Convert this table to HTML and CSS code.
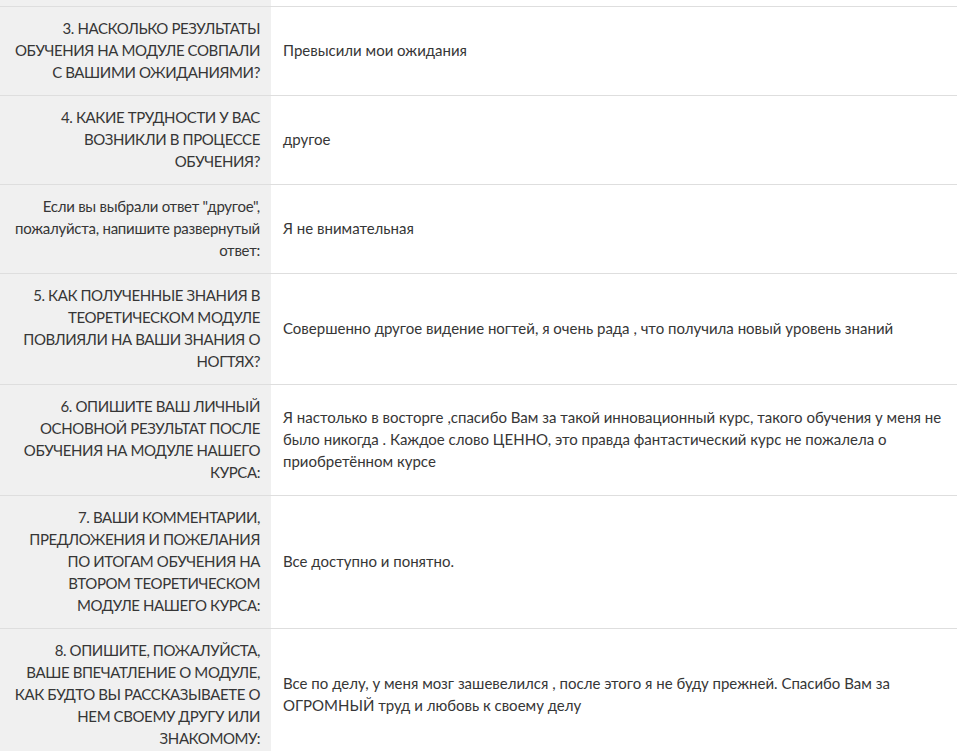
FILE: index.html
```html
<!DOCTYPE html>
<html lang="ru">
<head>
    <meta charset="UTF-8">
    <title>Результаты анкеты</title>
    <link rel="stylesheet" href="styles.css">
</head>
<body>
    <table class="answers">
        <tr class="cut-row">
            <th></th>
            <td></td>
        </tr>
        <tr>
            <th>3. НАСКОЛЬКО РЕЗУЛЬТАТЫ ОБУЧЕНИЯ НА МОДУЛЕ СОВПАЛИ С ВАШИМИ ОЖИДАНИЯМИ?</th>
            <td>Превысили мои ожидания</td>
        </tr>
        <tr>
            <th>4. КАКИЕ ТРУДНОСТИ У ВАС ВОЗНИКЛИ В ПРОЦЕССЕ ОБУЧЕНИЯ?</th>
            <td>другое</td>
        </tr>
        <tr>
            <th class="note">Если вы выбрали ответ "другое", пожалуйста, напишите развернутый ответ:</th>
            <td>Я не внимательная</td>
        </tr>
        <tr>
            <th>5. КАК ПОЛУЧЕННЫЕ ЗНАНИЯ В ТЕОРЕТИЧЕСКОМ МОДУЛЕ ПОВЛИЯЛИ НА ВАШИ ЗНАНИЯ О НОГТЯХ?</th>
            <td>Совершенно другое видение ногтей, я очень рада , что получила новый уровень знаний</td>
        </tr>
        <tr>
            <th>6. ОПИШИТЕ ВАШ ЛИЧНЫЙ ОСНОВНОЙ РЕЗУЛЬТАТ ПОСЛЕ ОБУЧЕНИЯ НА МОДУЛЕ НАШЕГО КУРСА:</th>
            <td>Я настолько в восторге ,спасибо Вам за такой инновационный курс, такого обучения у меня не было никогда . Каждое слово ЦЕННО, это правда фантастический курс не пожалела о приобретённом курсе</td>
        </tr>
        <tr>
            <th>7. ВАШИ КОММЕНТАРИИ, ПРЕДЛОЖЕНИЯ И ПОЖЕЛАНИЯ ПО ИТОГАМ ОБУЧЕНИЯ НА ВТОРОМ ТЕОРЕТИЧЕСКОМ МОДУЛЕ НАШЕГО КУРСА:</th>
            <td>Все доступно и понятно.</td>
        </tr>
        <tr>
            <th>8. ОПИШИТЕ, ПОЖАЛУЙСТА, ВАШЕ ВПЕЧАТЛЕНИЕ О МОДУЛЕ, КАК БУДТО ВЫ РАССКАЗЫВАЕТЕ О НЕМ СВОЕМУ ДРУГУ ИЛИ ЗНАКОМОМУ:</th>
            <td>Все по делу, у меня мозг зашевелился , после этого я не буду прежней. Спасибо Вам за ОГРОМНЫЙ труд и любовь к своему делу</td>
        </tr>
    </table>
</body>
</html>
```

FILE: styles.css
```css
body {
    margin: 0;
    font-family: Lato, "Open Sans", sans-serif;
    font-size: 15px;
    line-height: 22px;
    color: #363636;
    background: #fff;
}
.answers {
    width: 100%;
    border-collapse: collapse;
}
.answers th,
.answers td {
    padding: 10px 12px 12px;
    border-bottom: 1px solid #dedede;
    vertical-align: middle;
}
.answers th {
    width: 249px;
    padding-left: 11px;
    padding-right: 11px;
    background: #f0f0f0;
    font-weight: normal;
    text-align: right;
    letter-spacing: -0.4px;
}
.answers th.note {
    letter-spacing: -0.25px;
}
.answers td {
    text-align: left;
}
.answers .cut-row th,
.answers .cut-row td {
    height: 6px;
    padding: 0;
}
```
